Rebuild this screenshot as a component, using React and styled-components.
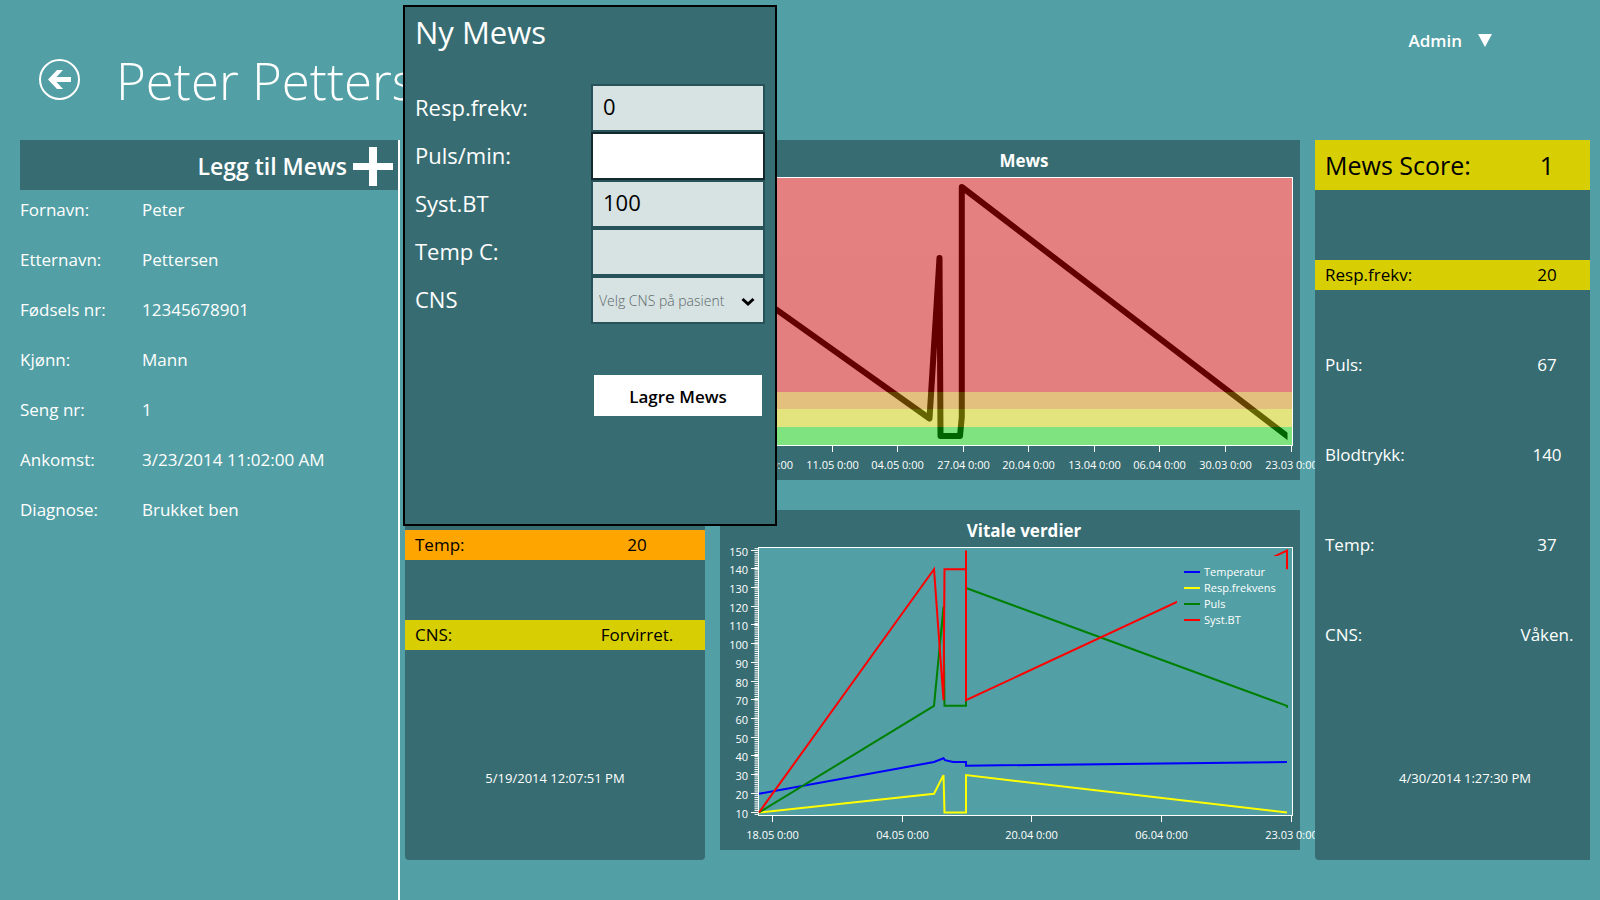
import React from "react";
import styled, { createGlobalStyle } from "styled-components";

const GlobalStyle = createGlobalStyle`
  * {
    box-sizing: border-box;
  }
  body {
    margin: 0;
    background-color: #529fa5;
    color: white;
    font-family: "Open Sans", "Noto Sans", sans-serif;
    font-size: 17px;
  }
  button, input, select {
    font-family: inherit;
  }
`;

const Page = styled.div`
  position: relative;
  display: flex;
  flex-direction: column;
  min-height: 100vh;
`;

const Header = styled.header`
  display: flex;
  align-items: center;
  height: 140px;
  padding: 20px 108px 0px 38px;
`;

const BackButton = styled.button`
  width: 42px;
  height: 42px;
  padding: 0px;
  border: none;
  background: none;
`;

const PatientName = styled.h1`
  flex: 1;
  margin: 0px 0px 0px 36px;
  font-size: 51px;
  font-weight: 300;
  line-height: 80px;
`;

const UserMenu = styled.button`
  display: flex;
  align-items: center;
  align-self: flex-start;
  gap: 16px;
  padding: 0px;
  border: none;
  background: none;
  color: white;
  font-size: 17px;
  font-weight: 600;
  line-height: 42px;
`;

const Body = styled.div`
  flex: 1;
  display: grid;
  grid-template-columns: 400px 1fr;
`;

const Sidebar = styled.aside`
  padding-left: 20px;
  border-right: solid white 2px;
`;

const AddButton = styled.button`
  display: flex;
  align-items: center;
  justify-content: flex-end;
  gap: 6px;
  width: 100%;
  height: 50px;
  padding: 2px 5px 0px 0px;
  border: none;
  background-color: #376d72;
  color: white;
  font-size: 23px;
  font-weight: 600;
`;

const Details = styled.dl`
  display: grid;
  grid-template-columns: 122px 1fr;
  row-gap: 10px;
  margin: 0px;
  line-height: 40px;
`;

const Term = styled.dt`
  margin: 0px;
`;

const Value = styled.dd`
  margin: 0px;
`;

const Board = styled.main`
  display: grid;
  grid-template-columns: 300px 1fr 275px;
  column-gap: 15px;
  padding: 0px 10px 40px 5px;
`;

const CardViewport = styled.div`
  position: relative;
  display: flex;
  overflow: hidden;
`;

const ScoreCard = styled.section`
  display: flex;
  flex-direction: column;
  justify-content: flex-end;
  flex: 0 0 300px;
  border-radius: 0px 0px 4px 4px;
  background-color: #376d72;
`;

const levels = {
  none: "transparent",
  low: "#d7cf03",
  medium: "#ffa500",
};

const Reading = styled.div`
  display: grid;
  grid-template-columns: 1fr 100px;
  margin-bottom: 60px;
  padding: 0px 18px 0px 10px;
  background-color: ${(props) => levels[props.$level]};
  color: ${(props) => (props.$level === "none" ? "white" : "black")};
  line-height: 30px;

  span:last-child {
    text-align: center;
  }
`;

const Score = styled(Reading)`
  margin-bottom: auto;
  font-size: 25px;
  line-height: 50px;
`;

const Timestamp = styled.time`
  height: 150px;
  padding-top: 58px;
  font-size: 13px;
  line-height: 20px;
  text-align: center;
`;

const Charts = styled.div`
  display: flex;
  flex-direction: column;
  gap: 30px;
`;

const ChartPanel = styled.section`
  background-color: #376d72;
`;

const ChartTitle = styled.h2`
  margin: 0px;
  padding: 3px 0px 0px 28px;
  height: 36px;
  font-size: 17px;
  font-weight: 700;
  line-height: 36px;
  text-align: center;
`;

const Plot = styled.svg`
  display: block;
  width: 100%;
  overflow: visible;

  text {
    fill: white;
    font-size: 11px;
  }
`;

const Dialog = styled.form`
  position: absolute;
  top: 5px;
  left: 403px;
  z-index: 2;
  width: 374px;
  padding: 0px 10px 108px 10px;
  border: solid black 2px;
  background-color: #376d72;
`;

const DialogTitle = styled.h2`
  margin: 0px;
  height: 77px;
  font-size: 31px;
  font-weight: 400;
  line-height: 50px;
`;

const Field = styled.div`
  display: grid;
  grid-template-columns: 1fr 174px;
  align-items: center;
  height: 48px;
`;

const Label = styled.label`
  padding-bottom: 2px;
  font-size: 22px;
`;

const TextInput = styled.input`
  width: 100%;
  height: 48px;
  padding: 0px 10px 4px 10px;
  border: solid #27525a 2px;
  border-radius: 0px;
  outline: none;
  background-color: #d7e2e2;
  color: black;
  font-size: 22px;

  &.active {
    border-color: #13292e;
    background-color: white;
  }
`;

const SelectBox = styled.div`
  position: relative;

  svg {
    position: absolute;
    top: 19px;
    right: 10px;
    pointer-events: none;
  }
`;

const Select = styled.select`
  appearance: none;
  width: 100%;
  height: 48px;
  padding: 0px 30px 0px 6px;
  border: solid #27525a 2px;
  border-radius: 0px;
  background-color: #d7e2e2;
  color: #5d696a;
  font-size: 14px;
  font-weight: 300;
`;

const SaveButton = styled.button`
  display: block;
  width: 168px;
  height: 41px;
  margin: 51px 3px 0px auto;
  padding: 2px 0px 0px 0px;
  border: none;
  background-color: white;
  color: black;
  font-size: 17px;
  font-weight: 600;
`;

const details = [
  ["Fornavn:", "Peter"],
  ["Etternavn:", "Pettersen"],
  ["Fødsels nr:", "12345678901"],
  ["Kjønn:", "Mann"],
  ["Seng nr:", "1"],
  ["Ankomst:", "3/23/2014 11:02:00 AM"],
  ["Diagnose:", "Brukket ben"],
];

const latest = [
  { name: "Temp:", value: "20", level: "medium" },
  { name: "CNS:", value: "Forvirret.", level: "low" },
];

const previous = [
  { name: "Resp.frekv:", value: "20", level: "low" },
  { name: "Puls:", value: "67", level: "none" },
  { name: "Blodtrykk:", value: "140", level: "none" },
  { name: "Temp:", value: "37", level: "none" },
  { name: "CNS:", value: "Våken.", level: "none" },
];

const mewsTicks = [
  [112.5, "11.05 0:00"],
  [177.5, "04.05 0:00"],
  [243.5, "27.04 0:00"],
  [308.5, "20.04 0:00"],
  [374.5, "13.04 0:00"],
  [439.5, "06.04 0:00"],
  [505.5, "30.03 0:00"],
  [571.5, "23.03 0:00"],
];

const vitalTicks = [
  [52.5, "18.05 0:00"],
  [182.5, "04.05 0:00"],
  [311.5, "20.04 0:00"],
  [441.5, "06.04 0:00"],
  [571.5, "23.03 0:00"],
];

const series = [
  {
    name: "Temperatur",
    color: "blue",
    points: [[39, 20], [214, 37], [223.5, 39], [225, 38], [233, 37], [246, 37], [246, 35], [567, 37]],
  },
  {
    name: "Resp.frekvens",
    color: "yellow",
    points: [[39, 10], [214, 20], [223.5, 30], [224.5, 10], [246, 10], [246, 30], [567, 10]],
  },
  {
    name: "Puls",
    color: "green",
    points: [[39, 10], [214, 67], [223.5, 120], [224.5, 67], [246, 67], [246, 130], [567, 67], [567, 66]],
  },
  {
    name: "Syst.BT",
    color: "red",
    points: [[39, 10], [214, 140], [223.5, 70], [224.5, 140], [246, 140], [246, 150], [246, 70], [567, 150], [567, 140]],
  },
];

// vertical position of a value on the 10-150 axis
const scaleY = (value) => 266.5 - (value - 10) * 1.871;

const toPoints = (points) => points.map(([x, v]) => `${x},${scaleY(v)}`).join(" ");

const XAxis = ({ ticks }) => (
  <g>
    {ticks.map(([x, label]) => (
      <g key={x}>
        <path d={`M${x} 270V276`} stroke="white" />
        <text x={x} y="293" textAnchor="middle">
          {label}
        </text>
      </g>
    ))}
  </g>
);

const MewsChart = () => (
  <Plot viewBox="0 0 580 304" role="img" aria-label="Mews">
    <clipPath id="mewsArea">
      <rect x="31" y="2" width="536.5" height="267" />
    </clipPath>
    <rect x="30.5" y="1.5" width="542" height="268" fill="#d3d3d3" stroke="white" />
    <path
      d="M31 115.6L209.5 242.5L219.5 82L220.5 260H240L241.8 241V11L571 263"
      fill="none"
      stroke="black"
      strokeWidth="6"
      strokeLinejoin="round"
      clipPath="url(#mewsArea)"
    />
    <g opacity="0.392" shapeRendering="crispEdges">
      <rect x="31" y="2" width="541" height="214" fill="red" />
      <rect x="31" y="216" width="541" height="17" fill="orange" />
      <rect x="31" y="233" width="541" height="18" fill="yellow" />
      <rect x="31" y="251" width="541" height="18" fill="lime" />
    </g>
    <XAxis ticks={mewsTicks} />
    <text x="73" y="293" textAnchor="end">
      0:00
    </text>
  </Plot>
);

const VitalChart = () => {
  const major = Array.from({ length: 15 }, (_, i) => 150 - i * 10);
  const minor = Array.from({ length: 143 }, (_, i) => 151 - i);
  return (
    <Plot viewBox="0 0 580 304" role="img" aria-label="Vitale verdier">
      <rect x="38.5" y="1.5" width="534" height="268" fill="#529fa5" stroke="white" />
      {minor.map((v) => (
        <path key={v} d={`M34.5 ${scaleY(v)}H38`} stroke="white" />
      ))}
      {major.map((v) => (
        <g key={v}>
          <path d={`M31 ${Math.round(scaleY(v)) - 0.5}H38`} stroke="white" />
          <text x="28" y={Math.round(scaleY(v)) + 5} textAnchor="end">
            {v}
          </text>
        </g>
      ))}
      {series.map((s) => (
        <polyline key={s.name} points={toPoints(s.points)} fill="none" stroke={s.color} strokeWidth="2" />
      ))}
      <rect x="457" y="10" width="105" height="76" fill="#529fa5" />
      {series.map((s, i) => (
        <g key={s.name}>
          <path d={`M464 ${26 + i * 16}H480`} stroke={s.color} strokeWidth="2" />
          <text x="484" y={30 + i * 16}>
            {s.name}
          </text>
        </g>
      ))}
      <XAxis ticks={vitalTicks} />
    </Plot>
  );
};

const Readings = ({ items }) =>
  items.map((item) => (
    <Reading key={item.name} $level={item.level}>
      <span>{item.name}</span>
      <span>{item.value}</span>
    </Reading>
  ));

const NewMewsDialog = () => (
  <Dialog>
    <DialogTitle>Ny Mews</DialogTitle>
    <Field>
      <Label htmlFor="resp">Resp.frekv:</Label>
      <TextInput id="resp" defaultValue="0" />
    </Field>
    <Field>
      <Label htmlFor="pulse">Puls/min:</Label>
      <TextInput id="pulse" className="active" />
    </Field>
    <Field>
      <Label htmlFor="syst">Syst.BT</Label>
      <TextInput id="syst" defaultValue="100" />
    </Field>
    <Field>
      <Label htmlFor="temp">Temp C:</Label>
      <TextInput id="temp" />
    </Field>
    <Field>
      <Label htmlFor="cns">CNS</Label>
      <SelectBox>
        <Select id="cns">
          <option>Velg CNS på pasient</option>
        </Select>
        <svg width="14" height="12" viewBox="0 0 14 12">
          <path d="M1.5 4L7 9L12.5 4" fill="none" stroke="black" strokeWidth="3" />
        </svg>
      </SelectBox>
    </Field>
    <SaveButton type="button">Lagre Mews</SaveButton>
  </Dialog>
);

const App = () => {
  return (
    <Page>
      <GlobalStyle />
      <Header>
        <BackButton aria-label="Tilbake">
          <svg width="42" height="42" viewBox="0 0 42 42">
            <circle cx="21.5" cy="20.5" r="19.5" fill="none" stroke="white" strokeWidth="2" />
            <path d="M10 20.5L19 11H25L18.5 18H33V23H18.5L25 30H19Z" fill="white" />
          </svg>
        </BackButton>
        <PatientName>Peter Pettersen</PatientName>
        <UserMenu>
          Admin
          <svg width="14" height="14" viewBox="0 0 14 14">
            <path d="M0 0H14L7 13Z" fill="white" />
          </svg>
        </UserMenu>
      </Header>
      <Body>
        <Sidebar>
          <AddButton>
            Legg til Mews
            <svg width="40" height="40" viewBox="0 0 40 40">
              <path d="M16 1H24V17H40V24H24V40H16V24H0V17H16Z" fill="white" />
            </svg>
          </AddButton>
          <Details>
            {details.map(([term, value]) => (
              <React.Fragment key={term}>
                <Term>{term}</Term>
                <Value>{value}</Value>
              </React.Fragment>
            ))}
          </Details>
        </Sidebar>
        <Board>
          <ScoreCard>
            <Readings items={latest} />
            <Timestamp>5/19/2014 12:07:51 PM</Timestamp>
          </ScoreCard>
          <Charts>
            <ChartPanel>
              <ChartTitle>Mews</ChartTitle>
              <MewsChart />
            </ChartPanel>
            <ChartPanel>
              <ChartTitle>Vitale verdier</ChartTitle>
              <VitalChart />
            </ChartPanel>
          </Charts>
          <CardViewport>
            <ScoreCard>
              <Score $level="low">
                <span>Mews Score:</span>
                <span>1</span>
              </Score>
              <Readings items={previous} />
              <Timestamp>4/30/2014 1:27:30 PM</Timestamp>
            </ScoreCard>
          </CardViewport>
        </Board>
      </Body>
      <NewMewsDialog />
    </Page>
  );
};

export default App;
